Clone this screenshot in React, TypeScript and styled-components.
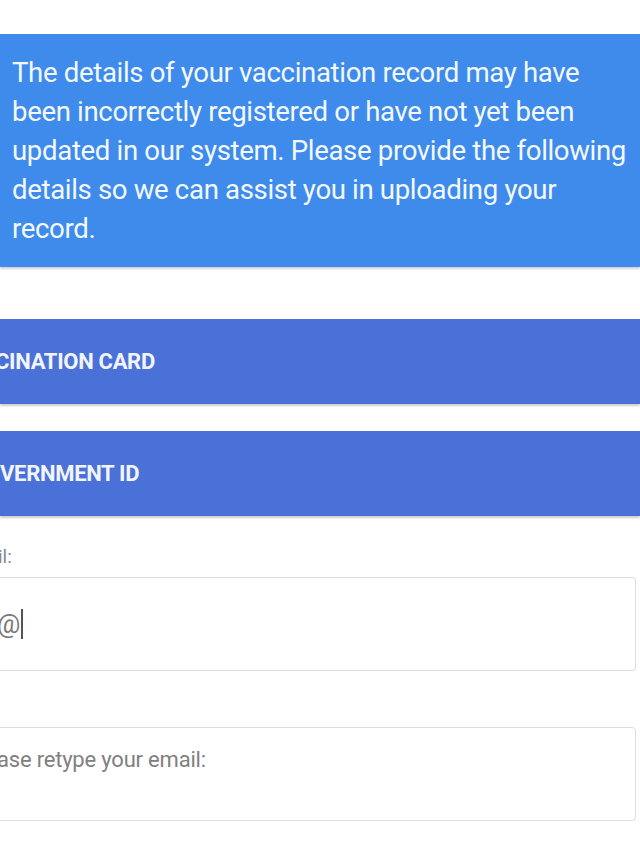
import React from "react";
import styled, { createGlobalStyle } from "styled-components";

const Global = createGlobalStyle`
  html, body { margin: 0; padding: 0; background: #ffffff; overflow: hidden; }
  body { font-family: Roboto, "Noto Sans", "Liberation Sans", sans-serif; }
`;

const Page = styled.div`
  width: 640px;
  height: 853px;
  overflow: hidden;
  padding-top: 34px;
  box-sizing: border-box;
  display: flex;
  flex-direction: column;
`;

const Notice = styled.div`
  background: #3e8bec;
  color: #f4f8ff;
  font-size: 27.6px;
  line-height: 39px;
  letter-spacing: -0.35px;
  padding: 19px 0 19px 12px;
  box-shadow: 0 2px 2px rgba(0, 0, 0, 0.18);
  height: 233px;
  box-sizing: border-box;
  white-space: nowrap;
`;

const Bar = styled.div<{ $top: number }>`
  margin-top: ${(p) => p.$top}px;
  height: 85px;
  background: #4a71d8;
  display: flex;
  align-items: center;
  box-shadow: 0 2px 2px rgba(0, 0, 0, 0.2);
  overflow: hidden;
`;

const BarText = styled.span<{ $shift: number }>`
  margin-left: ${(p) => p.$shift}px;
  color: #f2f5fd;
  font-weight: 700;
  font-size: 22px;
  letter-spacing: -0.3px;
  white-space: nowrap;
`;

const Label = styled.div`
  margin-top: 30px;
  margin-left: -2px;
  height: 22px;
  line-height: 22px;
  color: #8a8a8a;
  font-size: 19px;
`;

const Field = styled.div<{ $top: number }>`
  margin-top: ${(p) => p.$top}px;
  margin-left: -20px;
  width: 656px;
  height: 94px;
  box-sizing: border-box;
  border: 1.5px solid #dcdcdc;
  border-radius: 4px;
  display: flex;
  overflow: hidden;
`;

const Typed = styled.div`
  align-self: center;
  margin-left: 16px;
  display: flex;
  align-items: center;
  color: #7a7a7a;
  font-size: 26px;
`;

const Caret = styled.span`
  width: 2px;
  height: 30px;
  background: #555;
  margin-left: 1px;
`;

const Placeholder = styled.div`
  margin-left: 16px;
  margin-top: 17px;
  color: #808080;
  font-size: 22px;
  letter-spacing: -0.2px;
  line-height: 30px;
  white-space: nowrap;
`;

export default function App() {
  return (
    <>
      <Global />
      <Page>
        <Notice>
          The details of your vaccination record may have
          <br />
          been incorrectly registered or have not yet been
          <br />
          updated in our system. Please provide the following
          <br />
          details so we can assist you in uploading your
          <br />
          record.
        </Notice>
        <Bar $top={52}>
          <BarText $shift={-5}>CINATION CARD</BarText>
        </Bar>
        <Bar $top={27}>
          <BarText $shift={0}>VERNMENT ID</BarText>
        </Bar>
        <Label>il:</Label>
        <Field $top={9}>
          <Typed>
            @<Caret />
          </Typed>
        </Field>
        <Field $top={56}>
          <Placeholder>ase retype your email:</Placeholder>
        </Field>
      </Page>
    </>
  );
}
